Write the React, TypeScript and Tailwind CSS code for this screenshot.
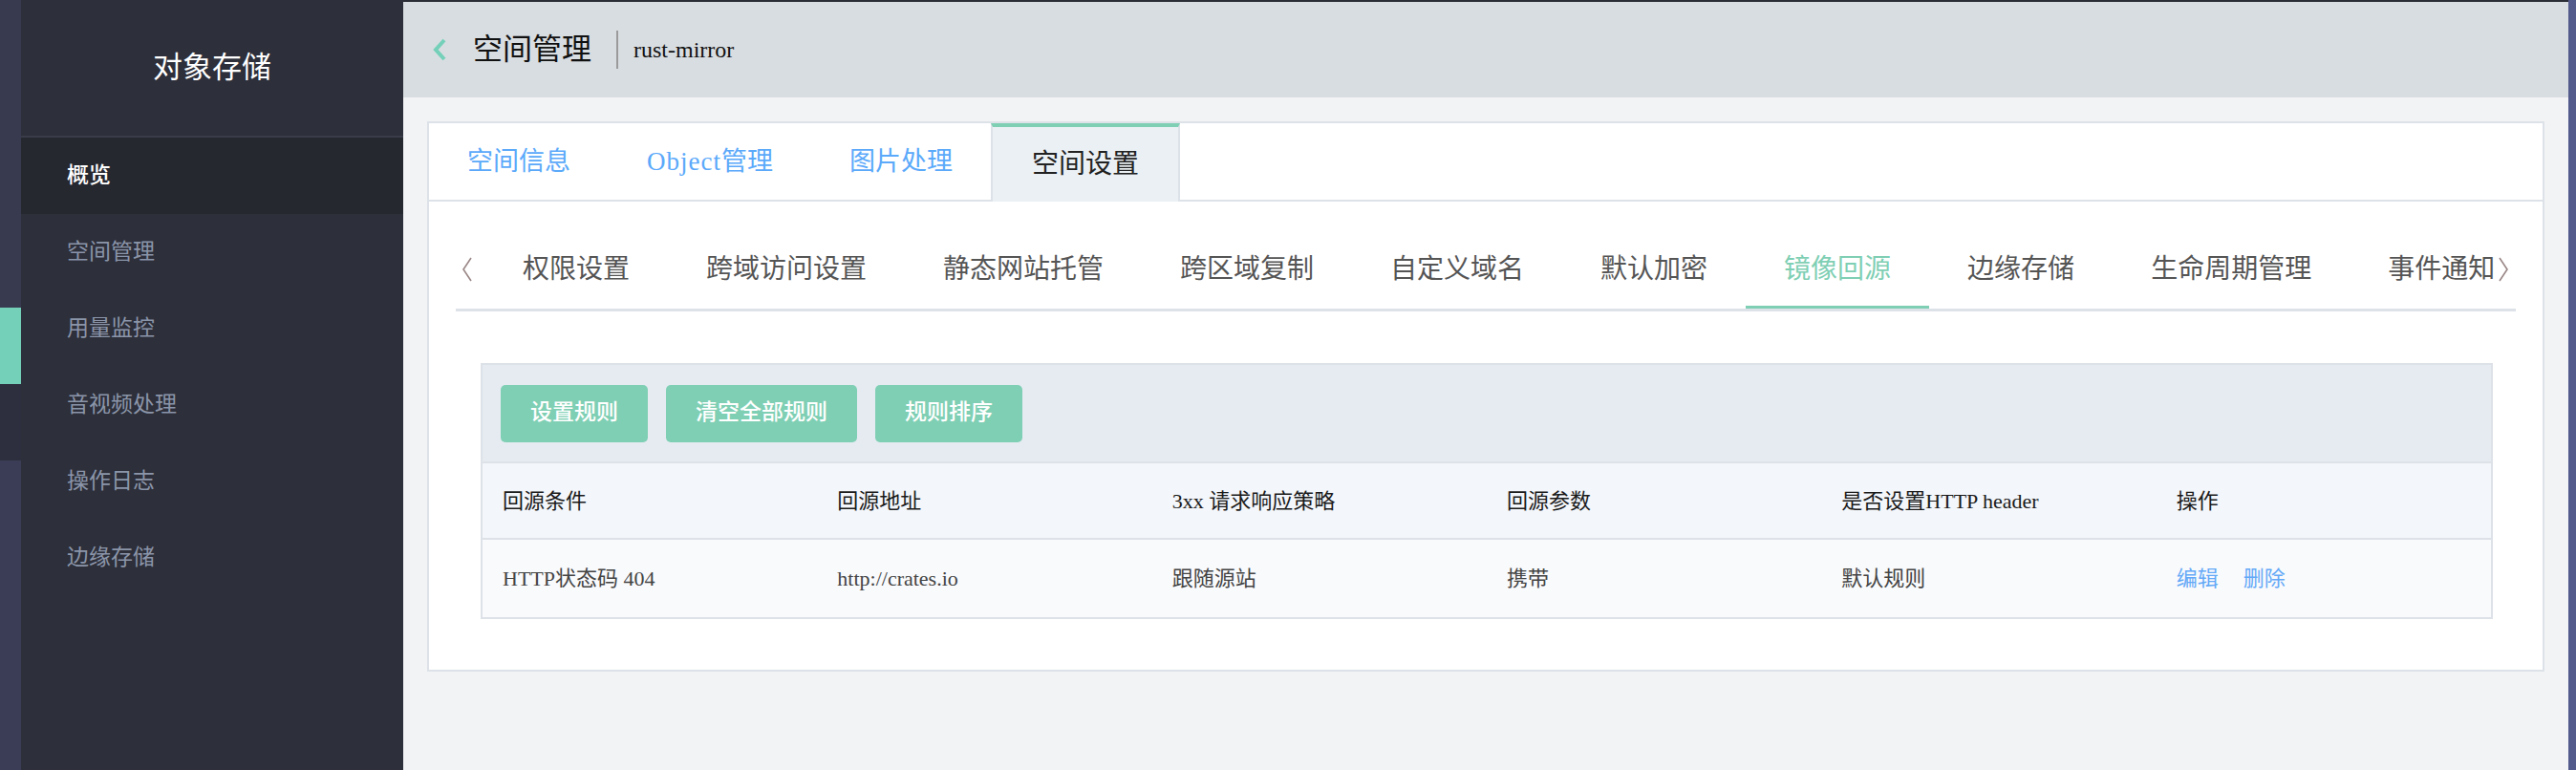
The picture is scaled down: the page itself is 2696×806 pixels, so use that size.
import React from 'react';

const SIDE_ITEMS = ['概览', '空间管理', '用量监控', '音视频处理', '操作日志', '边缘存储'];
const TOP_TABS = ['空间信息', 'Object管理', '图片处理', '空间设置'];
const SUB_TABS = ['权限设置', '跨域访问设置', '静态网站托管', '跨区域复制', '自定义域名', '默认加密', '镜像回源', '边缘存储', '生命周期管理', '事件通知'];
const COLUMNS = ['回源条件', '回源地址', '3xx 请求响应策略', '回源参数', '是否设置HTTP header', '操作'];
const ROW = ['HTTP状态码 404', 'http://crates.io', '跟随源站', '携带', '默认规则'];

const Chevron = ({ dir, className }: { dir: 'left' | 'right'; className?: string }) => (
  <svg className={className} viewBox="0 0 12 26" fill="none" stroke="currentColor" strokeWidth="1.6">
    {dir === 'left' ? <polyline points="10,1 2,13 10,25" /> : <polyline points="2,1 10,13 2,25" />}
  </svg>
);

export default function App() {
  return (
    <div className="flex w-[2696px] h-[806px] overflow-hidden font-['Liberation_Serif','Noto_Sans_CJK_SC',serif]">
      {/* far left strip */}
      <div className="w-[22px] flex flex-col shrink-0">
        <div className="h-[322px] bg-[#383b50]"></div>
        <div className="h-[80px] bg-[#74d0b9]"></div>
        <div className="h-[80px] bg-[#2e2f3e]"></div>
        <div className="flex-1 bg-[#3a3d55]"></div>
      </div>

      {/* sidebar */}
      <aside className="w-[400px] shrink-0 bg-[#2d2f3a] flex flex-col">
        <div className="h-[142px] flex items-center justify-center text-white text-[31px] border-b-2 border-[#3a3c4a] box-content">
          对象存储
        </div>
        {SIDE_ITEMS.map((item, i) => (
          <div
            key={item}
            className={`h-[80px] flex items-center pl-[48px] text-[23px] ${i === 0 ? 'bg-[#262830] text-white font-medium' : 'text-[#8b95a9]'}`}
          >
            {item}
          </div>
        ))}
      </aside>

      {/* main */}
      <main className="flex-1 min-w-0 flex flex-col bg-[#f2f3f5]">
        <header className="h-[102px] border-t-2 border-[#2b2d36] bg-[#d8dde1] flex items-center pl-[30px]">
          <svg className="w-[16px] h-[24px] text-[#74d0b9]" viewBox="0 0 16 24" fill="none" stroke="currentColor" strokeWidth="4">
            <polyline points="13,2 4,12 13,22" />
          </svg>
          <span className="ml-[27px] text-[31px] text-[#111]">空间管理</span>
          <span className="ml-[26px] w-[2px] h-[40px] bg-[#9a9a9a]"></span>
          <span className="ml-[16px] text-[24px] text-[#111]">rust-mirror</span>
        </header>

        <div className="px-[25px] pt-[25px]">
          <div className="bg-white border-2 border-[#dde2e8]">
            {/* top tabs */}
            <div className="flex h-[82px]">
              {TOP_TABS.map((tab) =>
                tab === '空间设置' ? (
                  <div key={tab} className="px-[41px] flex items-center bg-[#ebf0f4] border-t-4 border-x-2 border-t-[#7fcfb4] border-x-[#dde2e8] text-[28px] text-[#222]">
                    {tab}
                  </div>
                ) : (
                  <div key={tab} className="px-[40px] flex items-center border-b-2 border-[#dde2e8] text-[27px] text-[#5ba9fa]">
                    {tab === 'Object管理' ? (
                      <span><span className="tracking-[1px]">Object</span>管理</span>
                    ) : (
                      tab
                    )}
                  </div>
                )
              )}
              <div className="flex-1 border-b-2 border-[#dde2e8]"></div>
            </div>

            <div className="px-[28px] pt-[30px] pb-[53px]">
              {/* sub tabs */}
              <div className="flex h-[85px] border-b-[3px] border-[#dde2e8]">
                <div className="w-[30px] shrink-0 flex items-center pl-[6px]">
                  <Chevron dir="left" className="w-[12px] h-[26px] text-[#9a8686]" />
                </div>
                <div className="flex-1 min-w-0 flex overflow-hidden">
                  {SUB_TABS.map((tab) => (
                    <div
                      key={tab}
                      className={`relative shrink-0 px-[40px] flex items-center text-[28px] whitespace-nowrap ${tab === '镜像回源' ? 'text-[#7fcfb4]' : 'text-[#555]'}`}
                    >
                      {tab}
                      {tab === '镜像回源' && <span className="absolute left-0 right-0 bottom-[-3px] h-[6px] bg-[#7fcfb4]"></span>}
                    </div>
                  ))}
                </div>
                <div className="w-[23px] shrink-0 flex items-center pl-[4px]">
                  <Chevron dir="right" className="w-[12px] h-[26px] text-[#9a8686]" />
                </div>
              </div>

              {/* rules table */}
              <div className="mt-[54px] ml-[26px] mr-[24px] border-2 border-[#dde2e8]">
                <div className="h-[101px] bg-[#e6ebf2] flex items-center gap-[19px] px-[19px]">
                  {['设置规则', '清空全部规则', '规则排序'].map((b) => (
                    <button key={b} className="h-[60px] px-[31px] rounded-[5px] bg-[#7fcfb4] text-white text-[23px] font-medium">
                      {b}
                    </button>
                  ))}
                </div>
                <div className="grid grid-cols-6 h-[82px] bg-[#f3f6fa] border-y-2 border-[#dde2e8] text-[22px] text-[#1a1a1a]">
                  {COLUMNS.map((c) => (
                    <div key={c} className="flex items-center pl-[21px] whitespace-nowrap">{c}</div>
                  ))}
                </div>
                <div className="grid grid-cols-6 h-[81px] bg-[#f9fafc] text-[22px] text-[#444]">
                  {ROW.map((c) => (
                    <div key={c} className="flex items-center pl-[21px] whitespace-nowrap">{c}</div>
                  ))}
                  <div className="flex items-center pl-[21px] gap-[26px] text-[#64a9f7]">
                    <a href="#">编辑</a>
                    <a href="#">删除</a>
                  </div>
                </div>
              </div>
            </div>
          </div>
        </div>
      </main>

      {/* right edge strip */}
      <div className="w-[8px] shrink-0 bg-[#535a8c]"></div>
    </div>
  );
}
